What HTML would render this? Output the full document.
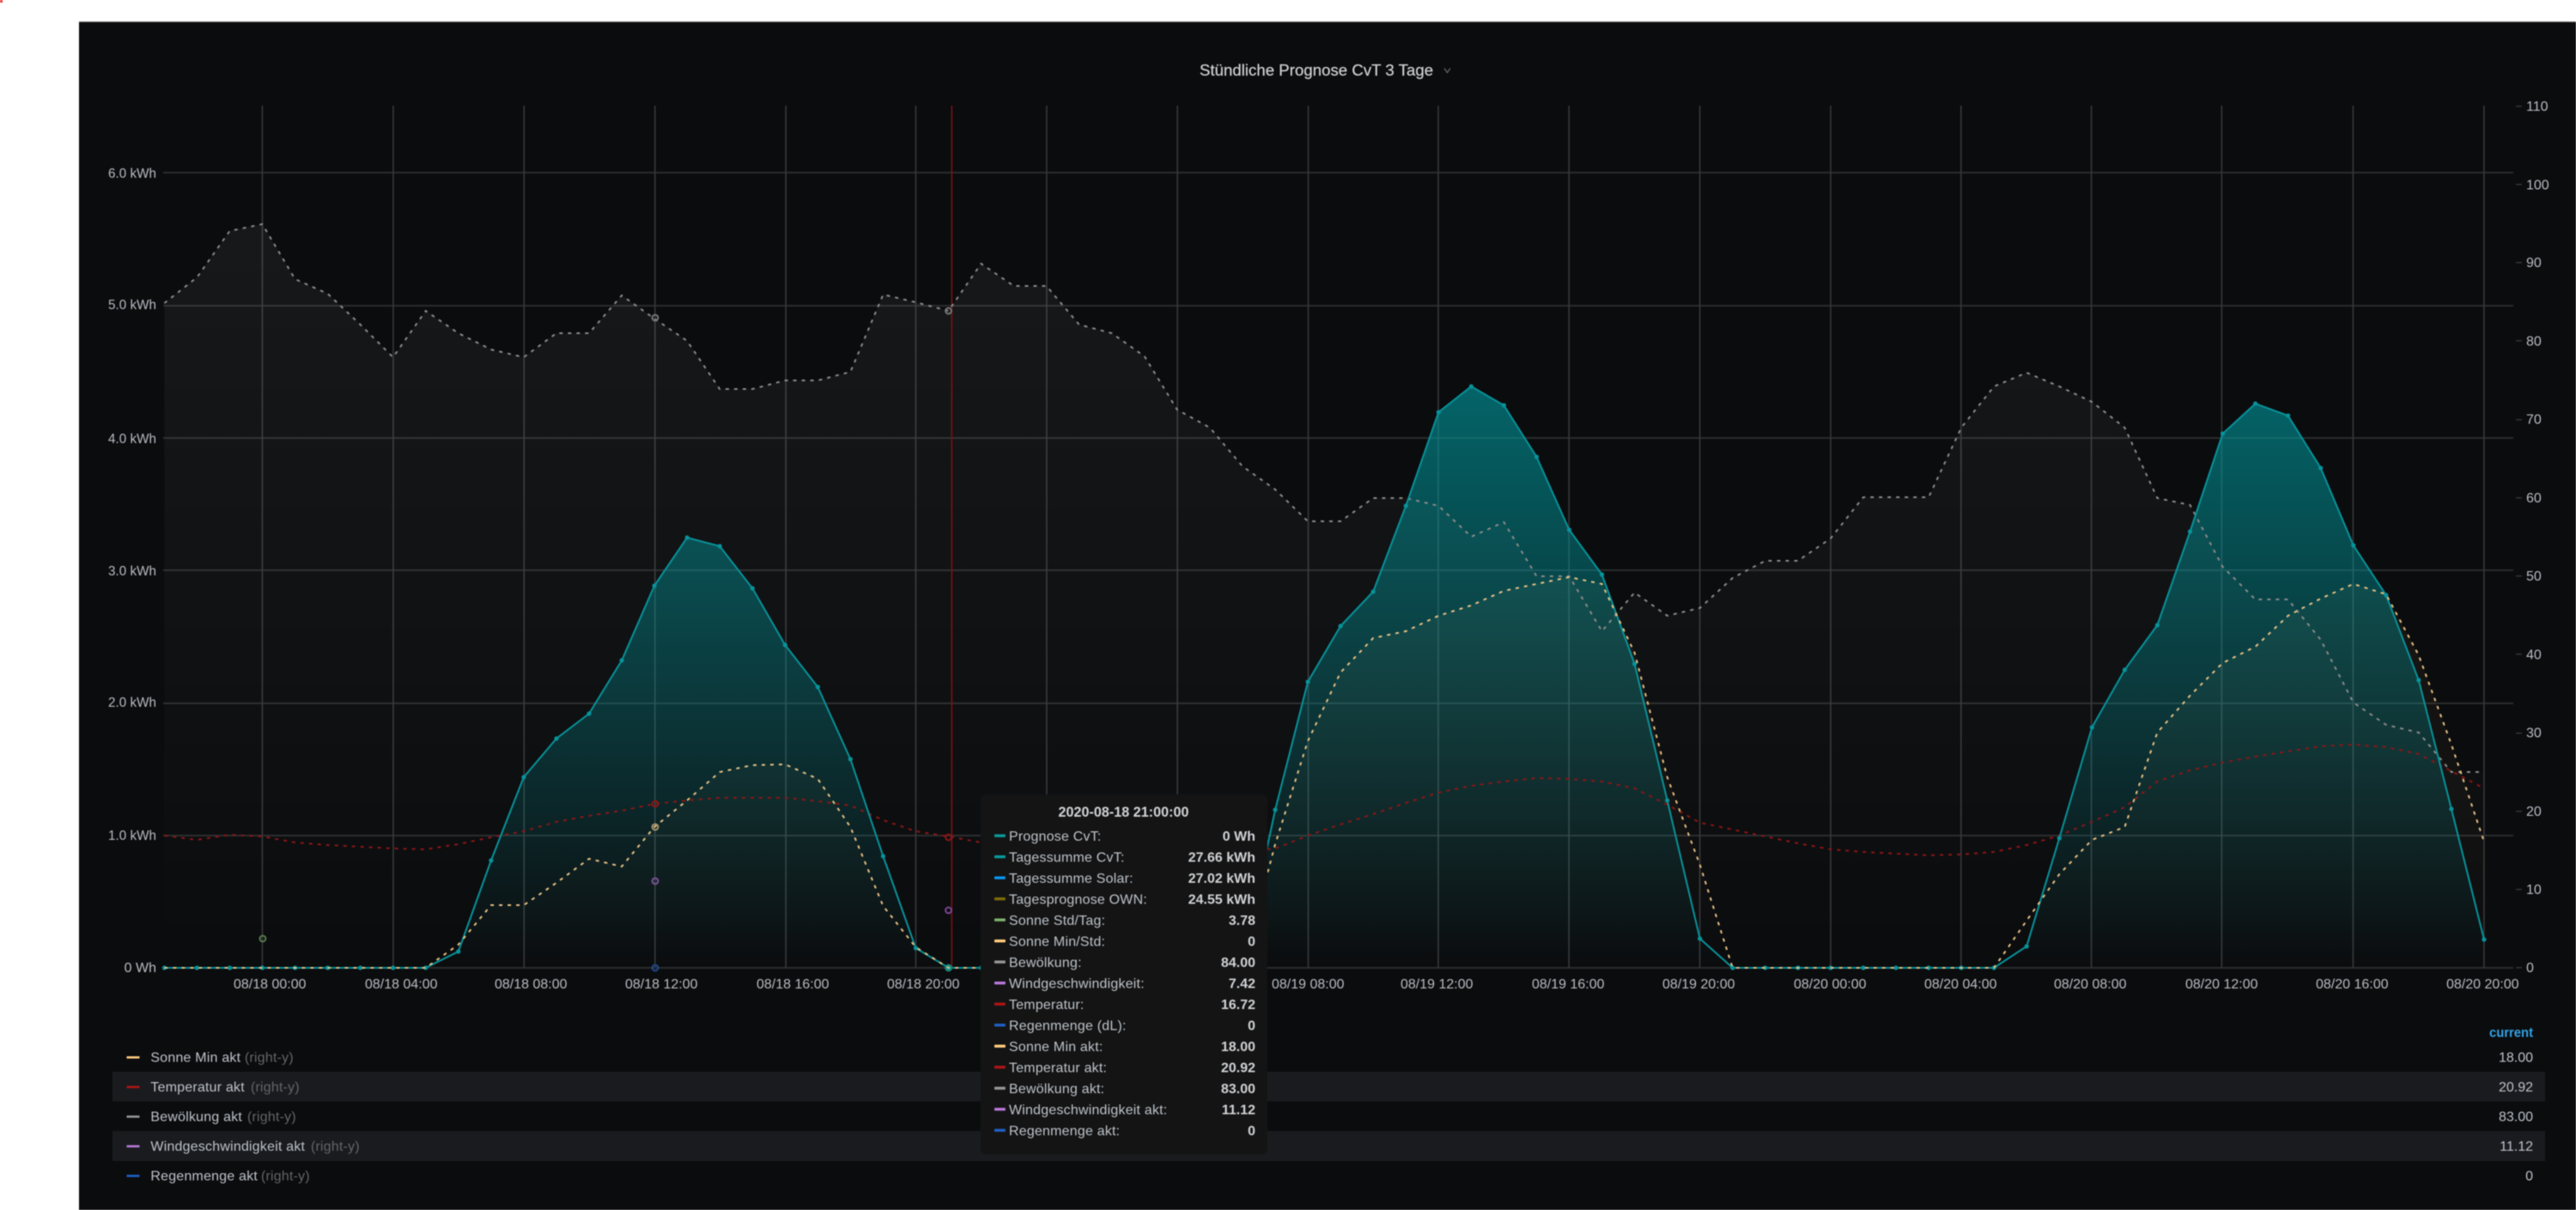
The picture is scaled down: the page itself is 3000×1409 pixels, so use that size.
<!DOCTYPE html>
<html><head><meta charset="utf-8"><title>Stündliche Prognose CvT 3 Tage</title>
<style>
html,body{margin:0;padding:0;background:#fff;width:3000px;height:1409px;overflow:hidden}
svg{display:block;filter:blur(.45px)}
text{font-family:"Liberation Sans",sans-serif;font-size:16px;fill:#bdc3ca}
.t{fill:#b8bcc2}
.l text{letter-spacing:.2px}
.g{fill:#636569}
.v{font-weight:bold;fill:#d0d2d5}
</style></head><body>
<svg width="3000" height="1409" viewBox="0 0 3000 1409" xmlns="http://www.w3.org/2000/svg">
<defs>
<linearGradient id="gt" gradientUnits="userSpaceOnUse" x1="0" y1="450" x2="0" y2="1127"><stop offset="0" stop-color="#00969b" stop-opacity=".64"/><stop offset="1" stop-color="#00969b" stop-opacity="0"/></linearGradient>
<linearGradient id="gg" gradientUnits="userSpaceOnUse" x1="0" y1="255" x2="0" y2="1127"><stop offset="0" stop-color="#fff" stop-opacity=".052"/><stop offset="1" stop-color="#fff" stop-opacity="0"/></linearGradient>
<linearGradient id="gy" gradientUnits="userSpaceOnUse" x1="0" y1="670" x2="0" y2="1127"><stop offset="0" stop-color="#ffcb7d" stop-opacity=".06"/><stop offset="1" stop-color="#ffcb7d" stop-opacity="0"/></linearGradient>
<marker id="d" markerUnits="userSpaceOnUse" markerWidth="8" markerHeight="8" refX="4" refY="4"><circle cx="4" cy="4" r="2.6" fill="#07939a"/></marker>
</defs>
<rect width="3000" height="1409" fill="#fff"/>
<rect x="0" y="0" width="3" height="3" fill="#f03030"/>
<rect x="92" y="25" width="2908" height="1384" fill="#0b0c0e"/>
<rect x="92" y="25" width="2908" height="1" fill="#6a6a6a"/>

<!-- horizontal grid -->
<g fill="#2b2c2e">
<rect x="190" y="200" width="2737" height="2"/><rect x="190" y="355" width="2737" height="2"/><rect x="190" y="509" width="2737" height="2"/><rect x="190" y="663" width="2737" height="2"/><rect x="190" y="818" width="2737" height="2"/><rect x="190" y="972" width="2737" height="2"/><rect x="190" y="1126" width="2737" height="2"/>
</g>
<!-- vertical grid -->
<g stroke="#37383a" stroke-width="1.6">
<path d="M305.5 123V1127M458 123V1127M610.3 123V1127M762.8 123V1127M915.2 123V1127M1066.5 123V1127M1219 123V1127M1371.2 123V1127M1523.6 123V1127M1675 123V1127M1827.2 123V1127M1979.6 123V1127M2132 123V1127M2283.8 123V1127M2435.6 123V1127M2587.4 123V1127M2740.4 123V1127M2892.9 123V1127"/>
</g>
<!-- right ticks -->
<g fill="#333436">
<rect x="2930" y="123" width="7" height="1.5"/><rect x="2930" y="214" width="7" height="1.5"/><rect x="2930" y="305" width="7" height="1.5"/><rect x="2930" y="396" width="7" height="1.5"/><rect x="2930" y="488" width="7" height="1.5"/><rect x="2930" y="579" width="7" height="1.5"/><rect x="2930" y="670" width="7" height="1.5"/><rect x="2930" y="761" width="7" height="1.5"/><rect x="2930" y="853" width="7" height="1.5"/><rect x="2930" y="944" width="7" height="1.5"/><rect x="2930" y="1035" width="7" height="1.5"/><rect x="2930" y="1126" width="7" height="1.5"/>
</g>

<!-- Bewölkung fill -->
<polygon fill="url(#gg)" points="191.4,1127 191.4,353 229.4,323 267.5,269 305.5,261 343.6,325 381.6,342 419.7,378 457.7,416 495.8,362 533.8,388 571.9,407 609.9,416 648,388 686,388 724.1,344 762.1,371 800.2,397 838.2,453 876.3,453 914.3,443 952.4,443 990.4,433 1028.5,343 1066.5,352 1104.6,362 1142.6,307 1180.7,333 1218.7,333 1256.8,378 1294.8,388 1332.9,415 1370.9,477 1409,498 1447,543 1485.1,570 1523.1,607 1561.2,607 1599.2,580 1637.3,580 1675.3,589 1713.4,625 1751.4,608 1789.5,671 1827.5,671 1865.6,735 1903.6,690 1941.7,717 1979.7,708 2017.8,673 2055.8,653 2093.9,653 2131.9,627 2170,579 2208,579 2246.1,579 2284.1,498 2322.2,450 2360.2,434 2398.3,450 2436.3,468 2474.4,498 2512.4,580 2550.5,588 2588.5,660 2626.6,698 2664.6,698 2702.7,745 2740.7,818 2778.8,844 2816.8,853 2854.9,899 2892.9,899 2892.9,1127"/>
<!-- Sonne fill -->
<polygon fill="url(#gy)" points="191.4,1127 495.8,1127 533.8,1100 571.9,1054 609.9,1054 648,1028 686,1000 724.1,1009 762.1,963 800.2,932 838.2,899 876.3,891 914.3,890 952.4,907 990.4,963 1028.5,1055 1066.5,1103 1104.6,1127 1447,1127 1485.1,983 1523.1,863 1561.2,783 1599.2,743 1637.3,735 1675.3,717 1713.4,705 1751.4,688 1789.5,680 1827.5,672 1865.6,680 1903.6,760 1941.7,905 1979.7,1007 2017.8,1127 2322.2,1127 2360.2,1072 2398.3,1018 2436.3,978 2474.4,963 2512.4,853 2550.5,810 2588.5,772 2626.6,753 2664.6,717 2702.7,697 2740.7,680 2778.8,692 2816.8,763 2854.9,867 2892.9,980 2892.9,1127"/>
<!-- Teal fill -->
<polygon fill="url(#gt)" points="495.8,1127 533.8,1108 571.9,1002 609.9,905 648,860 686,831 724.1,769 762.1,682 800.2,626 838.2,636 876.3,685 914.3,751 952.4,800 990.4,884 1028.5,997 1066.5,1104 1104.6,1127 1409,1127 1447,1120 1485.1,943 1523.1,794 1561.2,729 1599.2,689 1637.3,589 1675.3,480 1713.4,450 1751.4,472 1789.5,532 1827.5,617 1865.6,669 1903.6,773 1941.7,932 1979.7,1093 2017.8,1127 2322.2,1127 2360.2,1102 2398.3,976 2436.3,847 2474.4,780 2512.4,728 2550.5,619 2588.5,505 2626.6,470 2664.6,484 2702.7,545 2740.7,635 2778.8,693 2816.8,792 2854.9,942 2892.9,1094 2892.9,1127"/>

<!-- crosshair -->
<rect x="1107.6" y="123" width="1.6" height="1004" fill="#7a1212"/>

<!-- Bewölkung line -->
<polyline fill="none" stroke="#8a8a8a" stroke-width="2" stroke-dasharray="4 6" points="191.4,353 229.4,323 267.5,269 305.5,261 343.6,325 381.6,342 419.7,378 457.7,416 495.8,362 533.8,388 571.9,407 609.9,416 648,388 686,388 724.1,344 762.1,371 800.2,397 838.2,453 876.3,453 914.3,443 952.4,443 990.4,433 1028.5,343 1066.5,352 1104.6,362 1142.6,307 1180.7,333 1218.7,333 1256.8,378 1294.8,388 1332.9,415 1370.9,477 1409,498 1447,543 1485.1,570 1523.1,607 1561.2,607 1599.2,580 1637.3,580 1675.3,589 1713.4,625 1751.4,608 1789.5,671 1827.5,671 1865.6,735 1903.6,690 1941.7,717 1979.7,708 2017.8,673 2055.8,653 2093.9,653 2131.9,627 2170,579 2208,579 2246.1,579 2284.1,498 2322.2,450 2360.2,434 2398.3,450 2436.3,468 2474.4,498 2512.4,580 2550.5,588 2588.5,660 2626.6,698 2664.6,698 2702.7,745 2740.7,818 2778.8,844 2816.8,853 2854.9,899 2892.9,899"/>
<!-- Temperatur line -->
<polyline fill="none" stroke="#8c1616" stroke-width="2" stroke-dasharray="4 6" points="191.4,973 229.4,978 267.5,972 305.5,974 343.6,981 381.6,984 419.7,986 457.7,988 495.8,989 533.8,983 571.9,975 609.9,968 648,957 686,950 724.1,944 762.1,936 800.2,932 838.2,929 876.3,929 914.3,929 952.4,933 990.4,938 1028.5,955 1066.5,968 1104.6,974 1142.6,981 1180.7,985 1218.7,988 1256.8,990 1294.8,990 1332.9,992 1370.9,995 1409,995 1447,992 1485.1,988 1523.1,973 1561.2,960 1599.2,948 1637.3,935 1675.3,923 1713.4,915 1751.4,910 1789.5,906 1827.5,907 1865.6,910 1903.6,918 1941.7,937 1979.7,958 2017.8,966 2055.8,974 2093.9,982 2131.9,989 2170,992 2208,994 2246.1,996 2284.1,995 2322.2,992 2360.2,984 2398.3,973 2436.3,957 2474.4,940 2512.4,910 2550.5,897 2588.5,888 2626.6,881 2664.6,875 2702.7,869 2740.7,867 2778.8,870 2816.8,878 2854.9,898 2892.9,918"/>
<!-- Teal line -->
<polyline fill="none" stroke="#07939a" stroke-width="2" marker-start="url(#d)" marker-mid="url(#d)" marker-end="url(#d)" points="191.4,1127 229.4,1127 267.5,1127 305.5,1127 343.6,1127 381.6,1127 419.7,1127 457.7,1127 495.8,1127 533.8,1108 571.9,1002 609.9,905 648,860 686,831 724.1,769 762.1,682 800.2,626 838.2,636 876.3,685 914.3,751 952.4,800 990.4,884 1028.5,997 1066.5,1104 1104.6,1127 1142.6,1127 1180.7,1127 1218.7,1127 1256.8,1127 1294.8,1127 1332.9,1127 1370.9,1127 1409,1127 1447,1120 1485.1,943 1523.1,794 1561.2,729 1599.2,689 1637.3,589 1675.3,480 1713.4,450 1751.4,472 1789.5,532 1827.5,617 1865.6,669 1903.6,773 1941.7,932 1979.7,1093 2017.8,1127 2055.8,1127 2093.9,1127 2131.9,1127 2170,1127 2208,1127 2246.1,1127 2284.1,1127 2322.2,1127 2360.2,1102 2398.3,976 2436.3,847 2474.4,780 2512.4,728 2550.5,619 2588.5,505 2626.6,470 2664.6,484 2702.7,545 2740.7,635 2778.8,693 2816.8,792 2854.9,942 2892.9,1094"/>
<!-- Sonne line -->
<polyline fill="none" stroke="#e6c084" stroke-width="2" stroke-dasharray="4 6" points="191.4,1127 229.4,1127 267.5,1127 305.5,1127 343.6,1127 381.6,1127 419.7,1127 457.7,1127 495.8,1127 533.8,1100 571.9,1054 609.9,1054 648,1028 686,1000 724.1,1009 762.1,963 800.2,932 838.2,899 876.3,891 914.3,890 952.4,907 990.4,963 1028.5,1055 1066.5,1103 1104.6,1127 1142.6,1127 1180.7,1127 1218.7,1127 1256.8,1127 1294.8,1127 1332.9,1127 1370.9,1127 1409,1127 1447,1127 1485.1,983 1523.1,863 1561.2,783 1599.2,743 1637.3,735 1675.3,717 1713.4,705 1751.4,688 1789.5,680 1827.5,672 1865.6,680 1903.6,760 1941.7,905 1979.7,1007 2017.8,1127 2055.8,1127 2093.9,1127 2131.9,1127 2170,1127 2208,1127 2246.1,1127 2284.1,1127 2322.2,1127 2360.2,1072 2398.3,1018 2436.3,978 2474.4,963 2512.4,853 2550.5,810 2588.5,772 2626.6,753 2664.6,717 2702.7,697 2740.7,680 2778.8,692 2816.8,763 2854.9,867 2892.9,980"/>

<!-- hover circles -->
<g fill="none" stroke-width="2">
<circle cx="306" cy="1093" r="3.4" stroke="#557a4c"/>
<circle cx="763" cy="370" r="3.4" stroke="#777"/>
<circle cx="763" cy="963" r="3.4" stroke="#a8946c"/>
<circle cx="763" cy="936" r="3.4" stroke="#8c1616"/>
<circle cx="763" cy="1026" r="3.4" stroke="#7d5596"/>
<circle cx="763" cy="1127" r="3.4" stroke="#1c4a94"/>
<circle cx="1104.6" cy="362" r="3.4" stroke="#777"/>
<circle cx="1104.6" cy="975" r="3.4" stroke="#8c1616"/>
<circle cx="1104.6" cy="1060" r="3.4" stroke="#7d4596"/>
<circle cx="1104.6" cy="1127" r="3.4" stroke="#1d8a78"/>
</g>

<!-- title -->
<text x="1397" y="88" style="font-size:18.67px;fill:#d0d2d5;stroke:#d0d2d5;stroke-width:.2px">Stündliche Prognose CvT 3 Tage</text>
<path d="M1682 79.5l3.5 5 3.5-5" fill="none" stroke="#5c5e62" stroke-width="1.4"/>

<!-- left axis -->
<g text-anchor="end">
<text class="t" x="182" y="207" textLength="56" lengthAdjust="spacingAndGlyphs">6.0 kWh</text>
<text class="t" x="182" y="360" textLength="56" lengthAdjust="spacingAndGlyphs">5.0 kWh</text>
<text class="t" x="182" y="516" textLength="56" lengthAdjust="spacingAndGlyphs">4.0 kWh</text>
<text class="t" x="182" y="670" textLength="56" lengthAdjust="spacingAndGlyphs">3.0 kWh</text>
<text class="t" x="182" y="823" textLength="56" lengthAdjust="spacingAndGlyphs">2.0 kWh</text>
<text class="t" x="182" y="978" textLength="56" lengthAdjust="spacingAndGlyphs">1.0 kWh</text>
<text class="t" x="182" y="1132">0 Wh</text>
</g>
<!-- right axis -->
<g>
<text class="t" x="2942" y="129">110</text>
<text class="t" x="2942" y="220.5">100</text>
<text class="t" x="2942" y="311">90</text>
<text class="t" x="2942" y="402.5">80</text>
<text class="t" x="2942" y="493.5">70</text>
<text class="t" x="2942" y="585">60</text>
<text class="t" x="2942" y="676">50</text>
<text class="t" x="2942" y="767.5">40</text>
<text class="t" x="2942" y="858.5">30</text>
<text class="t" x="2942" y="950">20</text>
<text class="t" x="2942" y="1041">10</text>
<text class="t" x="2942" y="1132">0</text>
</g>
<!-- x axis -->
<g>
<text class="t" x="272" y="1151">08/18 00:00</text>
<text class="t" x="425" y="1151">08/18 04:00</text>
<text class="t" x="576" y="1151">08/18 08:00</text>
<text class="t" x="728" y="1151">08/18 12:00</text>
<text class="t" x="881" y="1151">08/18 16:00</text>
<text class="t" x="1033" y="1151">08/18 20:00</text>
<text class="t" x="1481" y="1151">08/19 08:00</text>
<text class="t" x="1631" y="1151">08/19 12:00</text>
<text class="t" x="1784" y="1151">08/19 16:00</text>
<text class="t" x="1936" y="1151">08/19 20:00</text>
<text class="t" x="2089" y="1151">08/20 00:00</text>
<text class="t" x="2241" y="1151">08/20 04:00</text>
<text class="t" x="2392" y="1151">08/20 08:00</text>
<text class="t" x="2545" y="1151">08/20 12:00</text>
<text class="t" x="2697" y="1151">08/20 16:00</text>
<text class="t" x="2849" y="1151">08/20 20:00</text>
</g>

<!-- legend -->
<rect x="131" y="1248" width="2833" height="34.5" fill="#1a1b1e"/>
<rect x="131" y="1317" width="2833" height="35" fill="#1a1b1e"/>
<g>
<rect x="147.5" y="1230" width="15" height="2.6" fill="#ffcb7d"/>
<rect x="147.5" y="1264.5" width="15" height="2.6" fill="#ad1515"/>
<rect x="147.5" y="1299" width="15" height="2.6" fill="#969696"/>
<rect x="147.5" y="1333.5" width="15" height="2.6" fill="#b877d9"/>
<rect x="147.5" y="1368" width="15" height="2.6" fill="#1f60c4"/>
</g>
<g class="l">
<text x="175.4" y="1236.5">Sonne Min akt</text><text class="g" x="285" y="1236.5">(right-y)</text>
<text x="175.4" y="1271">Temperatur akt</text><text class="g" x="292" y="1271">(right-y)</text>
<text x="175.4" y="1305.5">Bewölkung akt</text><text class="g" x="288" y="1305.5">(right-y)</text>
<text x="175.4" y="1340">Windgeschwindigkeit akt</text><text class="g" x="362" y="1340">(right-y)</text>
<text x="175.4" y="1374.5">Regenmenge akt</text><text class="g" x="304" y="1374.5">(right-y)</text>
</g>
<g text-anchor="end">
<text x="2950" y="1207.5" style="fill:#33a2e5;font-weight:bold" textLength="51" lengthAdjust="spacingAndGlyphs">current</text>
<text x="2950" y="1236.5">18.00</text>
<text x="2950" y="1271">20.92</text>
<text x="2950" y="1305.5">83.00</text>
<text x="2950" y="1340">11.12</text>
<text x="2950" y="1374.5">0</text>
</g>

<!-- tooltip -->
<rect x="1142" y="925" width="334" height="419" rx="6" fill="#141414"/>
<text x="1308.5" y="951" text-anchor="middle" class="v" style="font-size:16.2px">2020-08-18 21:00:00</text>
<g>
<rect x="1158" y="971.5" width="13" height="3.4" rx="1" fill="#0a9a9c"/>
<rect x="1158" y="996" width="13" height="3.4" rx="1" fill="#0a9a9c"/>
<rect x="1158" y="1020.5" width="13" height="3.4" rx="1" fill="#0a96f0"/>
<rect x="1158" y="1045" width="13" height="3.4" rx="1" fill="#7f6b08"/>
<rect x="1158" y="1069.5" width="13" height="3.4" rx="1" fill="#7eb26d"/>
<rect x="1158" y="1094" width="13" height="3.4" rx="1" fill="#ffcb7d"/>
<rect x="1158" y="1118.5" width="13" height="3.4" rx="1" fill="#969696"/>
<rect x="1158" y="1143" width="13" height="3.4" rx="1" fill="#b877d9"/>
<rect x="1158" y="1167.5" width="13" height="3.4" rx="1" fill="#ad1515"/>
<rect x="1158" y="1192" width="13" height="3.4" rx="1" fill="#1f60c4"/>
<rect x="1158" y="1216.5" width="13" height="3.4" rx="1" fill="#ffcb7d"/>
<rect x="1158" y="1241" width="13" height="3.4" rx="1" fill="#ad1515"/>
<rect x="1158" y="1265.5" width="13" height="3.4" rx="1" fill="#969696"/>
<rect x="1158" y="1290" width="13" height="3.4" rx="1" fill="#b877d9"/>
<rect x="1158" y="1314.5" width="13" height="3.4" rx="1" fill="#1f60c4"/>
</g>
<g class="l">
<text x="1175" y="979">Prognose CvT:</text>
<text x="1175" y="1003.5">Tagessumme CvT:</text>
<text x="1175" y="1028">Tagessumme Solar:</text>
<text x="1175" y="1052.5">Tagesprognose OWN:</text>
<text x="1175" y="1077">Sonne Std/Tag:</text>
<text x="1175" y="1101.5">Sonne Min/Std:</text>
<text x="1175" y="1126">Bewölkung:</text>
<text x="1175" y="1150.5">Windgeschwindigkeit:</text>
<text x="1175" y="1175">Temperatur:</text>
<text x="1175" y="1199.5">Regenmenge (dL):</text>
<text x="1175" y="1224">Sonne Min akt:</text>
<text x="1175" y="1248.5">Temperatur akt:</text>
<text x="1175" y="1273">Bewölkung akt:</text>
<text x="1175" y="1297.5">Windgeschwindigkeit akt:</text>
<text x="1175" y="1322">Regenmenge akt:</text>
</g>
<g text-anchor="end">
<text class="v" x="1462" y="979">0 Wh</text>
<text class="v" x="1462" y="1003.5">27.66 kWh</text>
<text class="v" x="1462" y="1028">27.02 kWh</text>
<text class="v" x="1462" y="1052.5">24.55 kWh</text>
<text class="v" x="1462" y="1077">3.78</text>
<text class="v" x="1462" y="1101.5">0</text>
<text class="v" x="1462" y="1126">84.00</text>
<text class="v" x="1462" y="1150.5">7.42</text>
<text class="v" x="1462" y="1175">16.72</text>
<text class="v" x="1462" y="1199.5">0</text>
<text class="v" x="1462" y="1224">18.00</text>
<text class="v" x="1462" y="1248.5">20.92</text>
<text class="v" x="1462" y="1273">83.00</text>
<text class="v" x="1462" y="1297.5">11.12</text>
<text class="v" x="1462" y="1322">0</text>
</g>
</svg>
</body></html>
